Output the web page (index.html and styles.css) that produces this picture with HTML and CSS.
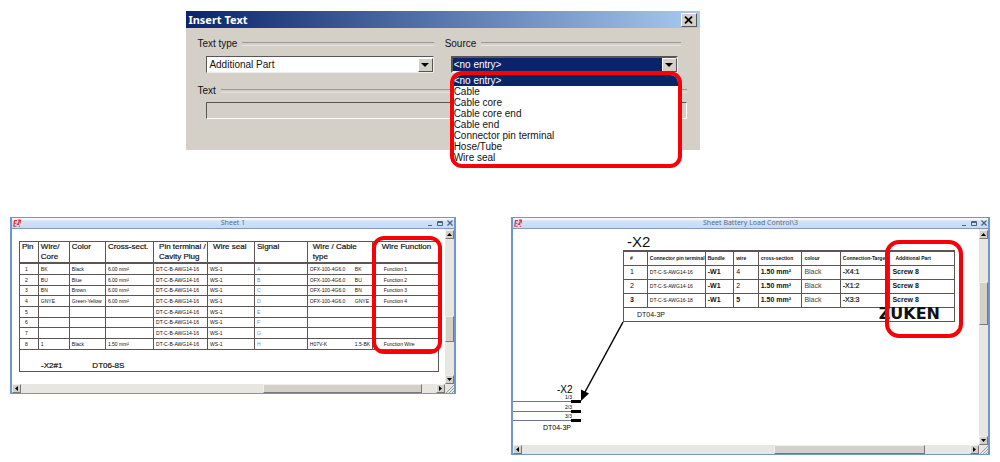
FILE: index.html
```html
<!DOCTYPE html>
<html lang="en">
<head>
<meta charset="utf-8">
<title>Insert Text</title>
<link rel="stylesheet" href="styles.css">
</head>
<body>
<main class="page">
  <section class="dialog" aria-label="Insert Text">
    <header class="dialog-title">
      <h1>Insert Text</h1>
      <button class="dialog-close" aria-label="Close"><svg width="9" height="8" viewBox="0 0 9 8"><path d="M1 .7 8 7.3M8 .7 1 7.3" stroke="#000" stroke-width="1.8"/></svg></button>
    </header>
    <div class="dialog-body">
      <div class="field">
        <label class="caption" for="type">Text type</label>
        <div class="combo">
          <select id="type"><option>Additional Part</option></select>
          <span class="combo-arrow"><svg width="8" height="4"><path d="M0 0h8L4 4z"/></svg></span>
        </div>
      </div>
      <div class="field">
        <label class="caption caption-short" for="source">Source</label>
        <div class="combo combo-active">
          <select id="source"><option>&lt;no entry&gt;</option></select>
          <span class="combo-arrow"><svg width="8" height="4"><path d="M0 0h8L4 4z"/></svg></span>
          <ul class="options marker" role="listbox" aria-label="Source">
            <li class="selected" role="option" aria-selected="true">&lt;no entry&gt;</li>
            <li role="option">Cable</li>
            <li role="option">Cable core</li>
            <li role="option">Cable core end</li>
            <li role="option">Cable end</li>
            <li role="option">Connector pin terminal</li>
            <li role="option">Hose/Tube</li>
            <li role="option">Wire seal</li>
          </ul>
        </div>
      </div>
      <div class="field field-wide">
        <label class="caption" for="text">Text</label>
        <input class="text-input" id="text" type="text" disabled>
      </div>
    </div>
  </section>

  <div class="sheets">
    <section class="window" aria-label="Sheet 1">
      <header class="window-title">
        <svg class="app-icon" width="10" height="9" viewBox="0 0 10 10"><path d="M5 1.8H2.200L1.400 8h3M1.900 4.800h2.500M6 1.300l1.800-.3L7 4 5.500 6h2M9 .8 8.400 5M7 8h1.500" fill="none" stroke="#e0303a" stroke-width="1.200"/></svg>
        <h2>Sheet 1</h2>
        <div class="window-buttons">
          <button aria-label="Minimize"><svg width="5" height="6"><path d="M0 5.500h4" stroke="#50617c"/></svg></button>
          <button aria-label="Maximize"><svg width="6" height="6"><path d="M.5 1.500h5v4h-5zM.5 2.500h5" fill="none" stroke="#50617c"/></svg></button>
          <button aria-label="Close"><svg width="6" height="6"><path d="M.5.500 5.500 5.500M5.500.500.5 5.500" stroke="#50617c" stroke-width="1.300"/></svg></button>
        </div>
      </header>
      <div class="window-body">
        <div class="canvas canvas-pins">
          <div class="pins">
            <table class="pin-table">
              <colgroup><col style="width:4.500%"><col style="width:7.400%"><col style="width:8.600%"><col style="width:11.500%"><col style="width:12.900%"><col style="width:11.200%"><col style="width:12.600%"><col style="width:15.500%"><col style="width:15.800%"></colgroup>
              <thead><tr><th>Pin</th><th>Wire/<br>Core</th><th>Color</th><th>Cross-sect.</th><th class="indent">Pin terminal /<br>Cavity Plug</th><th class="indent">Wire seal</th><th>Signal</th><th class="indent">Wire / Cable<br>type</th><th class="function">Wire Function</th></tr></thead>
              <tbody>
                <tr><td>1</td><td>BK</td><td>Black</td><td>6.00 mm²</td><td>DT-C-B-AWG14-16</td><td>WS-1</td><td>A</td><td><div class="pair"><span>OFX-100-4G6.0</span><span>BK</span></div></td><td>Function 1</td></tr>
                <tr><td>2</td><td>BU</td><td>Blue</td><td>6.00 mm²</td><td>DT-C-B-AWG14-16</td><td>WS-1</td><td>B</td><td><div class="pair"><span>OFX-100-4G6.0</span><span>BU</span></div></td><td>Function 2</td></tr>
                <tr><td>3</td><td>BN</td><td>Brown</td><td>6.00 mm²</td><td>DT-C-B-AWG14-16</td><td>WS-1</td><td>C</td><td><div class="pair"><span>OFX-100-4G6.0</span><span>BN</span></div></td><td>Function 3</td></tr>
                <tr><td>4</td><td>GNYE</td><td>Green-Yellow</td><td>6.00 mm²</td><td>DT-C-B-AWG14-16</td><td>WS-1</td><td>D</td><td><div class="pair"><span>OFX-100-4G6.0</span><span>GNYE</span></div></td><td>Function 4</td></tr>
                <tr><td>5</td><td></td><td></td><td></td><td>DT-C-B-AWG14-16</td><td>WS-1</td><td>E</td><td></td><td></td></tr>
                <tr><td>6</td><td></td><td></td><td></td><td>DT-C-B-AWG14-16</td><td>WS-1</td><td>F</td><td></td><td></td></tr>
                <tr><td>7</td><td></td><td></td><td></td><td>DT-C-B-AWG14-16</td><td>WS-1</td><td>G</td><td></td><td></td></tr>
                <tr><td>8</td><td>1</td><td>Black</td><td>1.50 mm²</td><td>DT-C-B-AWG14-16</td><td>WS-1</td><td>H</td><td><div class="pair"><span>H07V-K</span><span>1.5-BK</span></div></td><td>Function Wire</td></tr>
              </tbody>
            </table>
            <div class="pin-foot"><span>-X2#1</span><span>DT06-8S</span></div>
            <div class="marker pin-marker"></div>
          </div>
        </div>
        <div class="scroll-v">
          <button aria-label="Scroll up"><svg width="5" height="3"><path d="M0 3h5L2.500 0z"/></svg></button>
          <div class="track track-pins"><span class="thumb"></span></div>
          <button aria-label="Scroll down"><svg width="5" height="3"><path d="M0 0h5L2.500 3z"/></svg></button>
        </div>
        <div class="scroll-h">
          <button aria-label="Scroll left"><svg width="3" height="5"><path d="M3 0v5L0 2.500z"/></svg></button>
          <div class="track track-pins"><span class="thumb"></span></div>
          <button aria-label="Scroll right"><svg width="3" height="5"><path d="M0 0v5L3 2.500z"/></svg></button>
        </div>
        <svg class="grip" width="9" height="9"><path d="M1 9 9 1M4 9 9 4M7 9 9 7" stroke="#a09e98"/></svg>
      </div>
    </section>

    <section class="window" aria-label="Sheet Battery Load Control\3">
      <header class="window-title">
        <svg class="app-icon" width="10" height="9" viewBox="0 0 10 10"><path d="M5 1.8H2.200L1.400 8h3M1.900 4.800h2.500M6 1.300l1.800-.3L7 4 5.500 6h2M9 .8 8.400 5M7 8h1.500" fill="none" stroke="#e0303a" stroke-width="1.200"/></svg>
        <h2>Sheet Battery Load Control\3</h2>
        <div class="window-buttons">
          <button aria-label="Minimize"><svg width="5" height="6"><path d="M0 5.500h4" stroke="#50617c"/></svg></button>
          <button aria-label="Maximize"><svg width="6" height="6"><path d="M.5 1.500h5v4h-5zM.5 2.500h5" fill="none" stroke="#50617c"/></svg></button>
          <button aria-label="Close"><svg width="6" height="6"><path d="M.5.500 5.500 5.500M5.500.500.5 5.500" stroke="#50617c" stroke-width="1.300"/></svg></button>
        </div>
      </header>
      <div class="window-body">
        <div class="canvas canvas-wires">
          <svg class="schematic" aria-hidden="true">
            <path d="M0 172.500h58M0 182.500h58M0 191.500h58" stroke="#6b7690"/>
            <path d="M58 172.500h10M58 182.500h10M58 191.500h10" stroke="#000" stroke-width="3"/>
            <path d="M110 93 72 163" stroke="#000" stroke-width="1.500"/>
            <path d="M68 172V160.500l8 4z"/>
            <text class="node-name" x="44" y="164">-X2</text>
            <text class="node-pin" x="52" y="170">1/3</text>
            <text class="node-pin" x="52" y="180">2/3</text>
            <text class="node-pin" x="52" y="189">3/3</text>
            <text class="node-part" x="30" y="201">DT04-3P</text>
          </svg>
          <h3 class="connector">-X2</h3>
          <div class="wires">
            <table class="wire-table">
              <colgroup><col style="width:7.200%"><col style="width:17.500%"><col style="width:8.600%"><col style="width:7.400%"><col style="width:13.200%"><col style="width:11.600%"><col style="width:15.000%"><col style="width:19.500%"></colgroup>
              <thead><tr><th>#</th><th>Connector pin terminal</th><th>Bundle</th><th>wire</th><th>cross-section</th><th>colour</th><th>Connection-Target</th><th>Additional Part</th></tr></thead>
              <tbody>
                <tr><td>1</td><td>DT-C-S-AWG14-16</td><td>-W1</td><td>4</td><td>1.50 mm²</td><td>Black</td><td>-X4:1</td><td>Screw 8</td></tr>
                <tr><td>2</td><td>DT-C-S-AWG14-16</td><td>-W1</td><td>2</td><td>1.50 mm²</td><td>Black</td><td>-X1:2</td><td>Screw 8</td></tr>
                <tr class="strong"><td>3</td><td>DT-C-S-AWG16-18</td><td>-W1</td><td>5</td><td>1.50 mm²</td><td>Black</td><td>-X3:3</td><td>Screw 8</td></tr>
              </tbody>
            </table>
            <div class="wire-foot"><span>DT04-3P</span><strong class="brand">ZUKEN</strong></div>
            <div class="marker wire-marker"></div>
          </div>
        </div>
        <div class="scroll-v">
          <button aria-label="Scroll up"><svg width="5" height="3"><path d="M0 3h5L2.500 0z"/></svg></button>
          <div class="track track-wires"><span class="thumb"></span></div>
          <button aria-label="Scroll down"><svg width="5" height="3"><path d="M0 0h5L2.500 3z"/></svg></button>
        </div>
        <div class="scroll-h">
          <button aria-label="Scroll left"><svg width="3" height="5"><path d="M3 0v5L0 2.500z"/></svg></button>
          <div class="track track-wires"><span class="thumb"></span></div>
          <button aria-label="Scroll right"><svg width="3" height="5"><path d="M0 0v5L3 2.500z"/></svg></button>
        </div>
        <svg class="grip" width="9" height="9"><path d="M1 9 9 1M4 9 9 4M7 9 9 7" stroke="#a09e98"/></svg>
      </div>
    </section>
  </div>
</main>
</body>
</html>
```
FILE: styles.css
```css
* { box-sizing: border-box; }
body { margin: 0; background: #fff; color: #111; font-family: "Liberation Sans", Arial, sans-serif; }
h1, h2, h3, ul { margin: 0; padding: 0; }
button { padding: 0; margin: 0; border: 0; background: none; display: flex; align-items: center; justify-content: center; }
svg { display: block; }
.page { padding: 11px 10px 0; }
.marker { border: 4px solid #f80008; border-radius: 12px; }

/* Dialog */
.dialog { width: 52.4%; margin-left: 18%; background: #d4d0c8; }
.dialog-title { display: flex; align-items: center; justify-content: space-between; height: 17px; padding: 0 3px 0 2px; background: linear-gradient(90deg, #0a246a, #a6caf0); }
.dialog-title h1 { color: #fff; font: bold 11px/16px "Noto Sans", sans-serif; }
.dialog-close { width: 16px; height: 14px; background: #d4d0c8; border: 1px solid; border-color: #fff #555 #555 #fff; }
.dialog-body { display: grid; grid-template-columns: 236fr 242fr; column-gap: 11px; row-gap: 11px; padding: 9px 13px 31px 11px; font-size: 10px; }
.field-wide { grid-column: 1 / 3; }
.caption { display: flex; align-items: center; gap: 5px; line-height: 14px; margin-bottom: 5px; }
.field-wide .caption { margin-bottom: 4px; }
.caption-short { margin-right: 6px; }
.caption::after { content: ""; flex: 1; height: 2px; border-top: 1px solid #9a9894; border-bottom: 1px solid #e6e3dd; }
.combo { position: relative; margin-left: 9px; }
.combo-active { margin-left: 6px; margin-right: 9px; }
.combo select { display: block; appearance: none; width: 100%; height: 17px; padding: 0 2px; border: 1px solid; border-color: #555 #eee #eee #555; border-radius: 0; outline: 0; background: #fff; color: #111; font: 10px/15px "Liberation Sans", Arial, sans-serif; }
.combo-active select { background: #0a246a; color: #fff; border-width: 2px; line-height: 13px; padding: 0 1px; }
.combo-arrow { position: absolute; right: 1px; top: 2px; width: 15px; height: 14px; display: flex; align-items: center; justify-content: center; background: #d4d0c8; border: 1px solid; border-color: #fff #555 #555 #fff; pointer-events: none; }
.options { position: absolute; z-index: 2; left: -1px; right: -4px; top: 15px; padding-bottom: 1px; background: #fff; list-style: none; overflow: hidden; }
.options li { line-height: 11px; }
.options .selected { background: #0a246a; color: #fff; }
.text-input { display: block; width: calc(100% - 9px); height: 17px; margin-left: 9px; padding: 0 2px; border: 1px solid; border-color: #555 #fff #fff #555; background: #d4d0c8; }

/* Sheet windows */
.sheets { display: grid; grid-template-columns: 446fr 479fr; column-gap: 55px; align-items: start; margin-top: 67px; }
.window { min-width: 0; border: 1px solid #7197ca; border-left-width: 2px; border-right-width: 2px; background: #fff; }
.window-title { display: grid; grid-template-columns: 40px 1fr 40px; align-items: center; height: 11px; background: linear-gradient(#fff, #cfe2f8 35%, #c6dcf5); border-bottom: 1px solid #8399b8; }
.window-title h2 { color: #5b6f8c; font: 7px/10px "Noto Sans", sans-serif; text-align: center; }
.window-buttons { display: flex; justify-content: flex-end; gap: 4px; padding-right: 1px; }
.window-body { display: grid; grid-template-columns: minmax(0, 1fr) 9px; grid-template-rows: 1fr 9px; }
.canvas { position: relative; }
.scroll-v, .scroll-h { display: flex; background: #e7e6e1; }
.scroll-v { flex-direction: column; padding-top: 1px; }
.scroll-v button, .scroll-h button { flex: none; width: 9px; height: 9px; background: #d4d0c8; border: 1px solid; border-color: #eee #777 #777 #eee; }
.track { flex: 1; display: flex; }
.thumb { flex: none; background: #d4d0c8; border: 1px solid; border-color: #eee #777 #777 #eee; }
.scroll-v .track { flex-direction: column; }
.scroll-v .track-pins { padding-top: 77px; }
.scroll-v .track-pins .thumb { height: 26px; }
.scroll-v .track-wires { padding-top: 43px; }
.scroll-v .track-wires .thumb { height: 43px; }
.scroll-h .track-pins { padding-left: 56%; }
.scroll-h .track-pins .thumb { width: 92%; }
.scroll-h .track-wires { padding-left: 54%; }
.scroll-h .track-wires .thumb { width: 77%; }
.grip { background: #e7e6e1; }
table { width: 100%; table-layout: fixed; border-collapse: collapse; }
th, td { padding: 0; text-align: left; white-space: nowrap; border: 1px solid #5e5454; }
td { font-size: 5px; }

/* Pin sheet */
.canvas-pins { padding: 12px 6px 12px 7px; }
.pins { position: relative; }
.pin-table th { height: 21px; padding: 0 0 0 2px; vertical-align: top; font-size: 8px; font-weight: normal; line-height: 10px; border-bottom-width: 2px; -webkit-text-stroke: 0.2px #111; }
.pin-table th.indent { padding-left: 5px; }
.pin-table th.function { padding-left: 9px; }
.pin-table td { height: 11px; padding-left: 2px; line-height: 8px; }
.pin-table tr:nth-child(3n) td { height: 10px; }
.pin-table td:first-child { padding-left: 5px; }
.pin-table td:nth-child(7) { color: #4e97d6; }
.pin-table td:last-child { padding-left: 11px; }
.pin-table tr > :last-child { border-left-color: transparent; }
.pair { display: grid; grid-template-columns: 45px 1fr; }
.pin-foot { display: flex; gap: 30px; height: 22px; padding: 11px 0 0 21px; border: 1px solid #5e5454; border-top: 0; font-size: 8px; line-height: 10px; -webkit-text-stroke: 0.2px #111; }
.pin-marker { position: absolute; top: -5px; right: -3px; width: 70px; height: 118px; }

/* Wire sheet */
.canvas-wires { padding: 4px 24px 123px 110px; }
.schematic { position: absolute; left: 0; top: 0; width: 100%; height: 100%; }
.node-name { font-size: 10px; }
.node-pin { font-size: 5px; }
.node-part { font-size: 7px; }
.connector { padding-left: 4px; font-size: 15px; font-weight: normal; line-height: 17px; }
.wires { position: relative; }
.wire-table th { height: 14px; padding-left: 2px; font: bold 5px/8px "Liberation Sans", Arial, sans-serif; border-top-width: 2px; }
.wire-table th:first-child, .wire-table td:first-child { padding-left: 6px; }
.wire-table th:last-child { padding-left: 5px; }
.wire-table td { height: 14px; padding-left: 2px; font: 7px/8px "Liberation Sans", Arial, sans-serif; }
.wire-table td:nth-child(2) { font-size: 5px; }
.wire-table td:nth-child(3), .wire-table td:nth-child(8), .wire-table td:nth-child(5), .strong td:first-child, .strong td:nth-child(4) { font-weight: bold; }
.wire-table td:nth-child(7) { -webkit-text-stroke: 0.2px #111; }
.wire-table td:nth-child(6) { color: #444; }
.wire-foot { display: flex; align-items: center; justify-content: space-between; height: 14px; padding: 0 14px 0 13px; border: 1px solid #5e5454; border-top: 0; font-size: 7px; }
.brand { font: bold 16px/12px "DejaVu Sans", sans-serif; }
.wire-marker { position: absolute; top: -10px; right: -8px; width: 78px; height: 98px; border-radius: 14px; }
```
